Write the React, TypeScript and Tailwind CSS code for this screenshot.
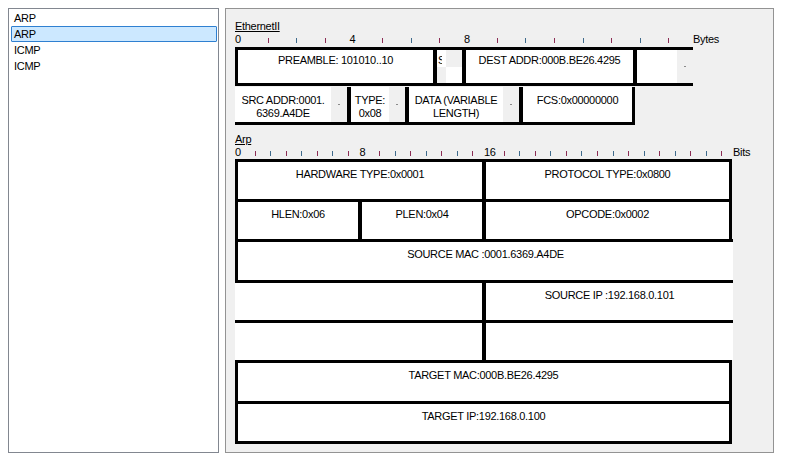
import React from "react";

const frames = ["ARP", "ARP", "ICMP", "ICMP"];

function Ruler({
  count,
  cellClass,
  labels,
  unit,
}: {
  count: number;
  cellClass: string;
  labels: number[];
  unit: string;
}) {
  return (
    <div className="flex h-[13px] leading-[12px]">
      {Array.from({ length: count }, (_, k) => (
        <div key={k} className={`flex-none ${cellClass}`}>
          {labels.includes(k) ? (
            <span>{k}</span>
          ) : (
            <div
              className={`ml-[4px] mt-[5px] h-[5px] w-px ${
                k % 2 ? "bg-[#8c2d55]" : "bg-[#3f6b8c]"
              }`}
            />
          )}
        </div>
      ))}
      <span>{unit}</span>
    </div>
  );
}

function Dash() {
  return (
    <div className="flex flex-1 items-center justify-center">
      <span className="h-px w-[2px] bg-[#8a8a8a]" />
    </div>
  );
}

export default function App() {
  return (
    <div className="flex h-[459px] w-[788px] gap-[6px] bg-white p-[8px] font-['Liberation_Sans',Arial,sans-serif] text-[11px] tracking-[-0.3px] text-black">
      {/* frame list */}
      <div className="h-[445px] w-[211px] flex-none border border-[#828790] bg-white pt-[1px] pl-[2px] pr-[1px]">
        {frames.map((f, i) => (
          <div
            key={i}
            className={`h-[16px] rounded-[1px] border pl-[2px] leading-[14px] ${
              i === 1 ? "border-[#2f80d1] bg-[#cce8ff]" : "border-transparent"
            }`}
          >
            {f}
          </div>
        ))}
      </div>

      {/* pdu details */}
      <div className="h-[445px] w-[549px] flex-none border border-[#939393] bg-[#f0f0f0] pl-[9px] pt-[10px]">
        <div className="h-[14px] leading-[14px] underline">EthernetII</div>
        <Ruler count={16} cellClass="w-[28.625px]" labels={[0, 4, 8]} unit="Bytes" />

        <div className="mt-[1px] flex h-[39px] w-[458px] border-y-[3px] border-black leading-[13px]">
          <div className="w-[198px] flex-none border-l-[3px] border-black bg-white pt-[4px] text-center">
            PREAMBLE: 101010..10
          </div>
          <div className="grid w-[29px] flex-none grid-cols-[9px_16px] grid-rows-[17px_16px] border-l-[4px] border-black">
            <div className="bg-white pl-[1px] pt-[4px]">
              <div className="w-[4px] overflow-hidden whitespace-nowrap">SFD</div>
            </div>
            <div />
            <div />
            <div className="bg-white" />
          </div>
          <div className="w-[171px] flex-none border-l-[4px] border-black bg-white pt-[4px] text-center whitespace-nowrap">
            DEST ADDR:000B.BE26.4295
          </div>
          <div className="flex w-[60px] flex-none border-l-[4px] border-black">
            <div className="w-[40px] bg-white" />
            <Dash />
          </div>
        </div>

        <div className="mt-[1px] flex h-[38px] w-[400px] border-b-[3px] border-black leading-[13px]">
          <div className="flex w-[112px] flex-none">
            <div className="w-[96px] bg-white pt-[7px] text-center whitespace-nowrap">
              SRC ADDR:0001.
              <br />
              6369.A4DE
            </div>
            <Dash />
          </div>
          <div className="flex w-[58px] flex-none border-l-[4px] border-black">
            <div className="w-[38px] bg-white pt-[7px] text-center">
              TYPE:
              <br />
              0x08
            </div>
            <Dash />
          </div>
          <div className="flex w-[114px] flex-none border-l-[4px] border-black">
            <div className="w-[94px] bg-white pt-[7px] text-center whitespace-nowrap">
              DATA (VARIABLE
              <br />
              LENGTH)
            </div>
            <Dash />
          </div>
          <div className="w-[116px] flex-none border-x-[4px] border-r-[3px] border-black bg-white pt-[7px] text-center">
            FCS:0x00000000
          </div>
        </div>

        <div className="mt-[7px] h-[14px] leading-[14px] underline">Arp</div>
        <Ruler count={32} cellClass="w-[15.5625px]" labels={[0, 8, 16]} unit="Bits" />

        <div className="leading-[13px]">
          <div className="flex h-[40px] w-[497px] border-x-[3px] border-t-[3px] border-black bg-white">
            <div className="w-[244px] flex-none pt-[6px] text-center">HARDWARE TYPE:0x0001</div>
            <div className="flex-1 border-l-[4px] border-black pt-[6px] text-center">PROTOCOL TYPE:0x0800</div>
          </div>
          <div className="flex h-[40px] w-[497px] border-x-[3px] border-t-[3px] border-black bg-white">
            <div className="w-[120px] flex-none pt-[6px] text-center">HLEN:0x06</div>
            <div className="w-[124px] flex-none border-l-[4px] border-black pt-[6px] text-center">PLEN:0x04</div>
            <div className="flex-1 border-l-[4px] border-black pt-[6px] text-center">OPCODE:0x0002</div>
          </div>
          <div className="h-[41px] w-[498px] border-l-[3px] border-t-[3px] border-black bg-white pt-[6px] text-center">
            SOURCE MAC :0001.6369.A4DE
          </div>
          <div className="flex h-[40px] w-[498px] border-t-[3px] border-black bg-white">
            <div className="w-[247px] flex-none" />
            <div className="flex-1 border-l-[4px] border-black pt-[6px] text-center">SOURCE IP :192.168.0.101</div>
          </div>
          <div className="flex h-[40px] w-[498px] border-t-[3px] border-black bg-white">
            <div className="w-[247px] flex-none" />
            <div className="flex-1 border-l-[4px] border-black" />
          </div>
          <div className="h-[41px] w-[497px] border-x-[3px] border-t-[3px] border-black bg-white pt-[6px] text-center">
            TARGET MAC:000B.BE26.4295
          </div>
          <div className="h-[43px] w-[497px] border-[3px] border-black bg-white pt-[6px] text-center">
            TARGET IP:192.168.0.100
          </div>
        </div>
      </div>
    </div>
  );
}
